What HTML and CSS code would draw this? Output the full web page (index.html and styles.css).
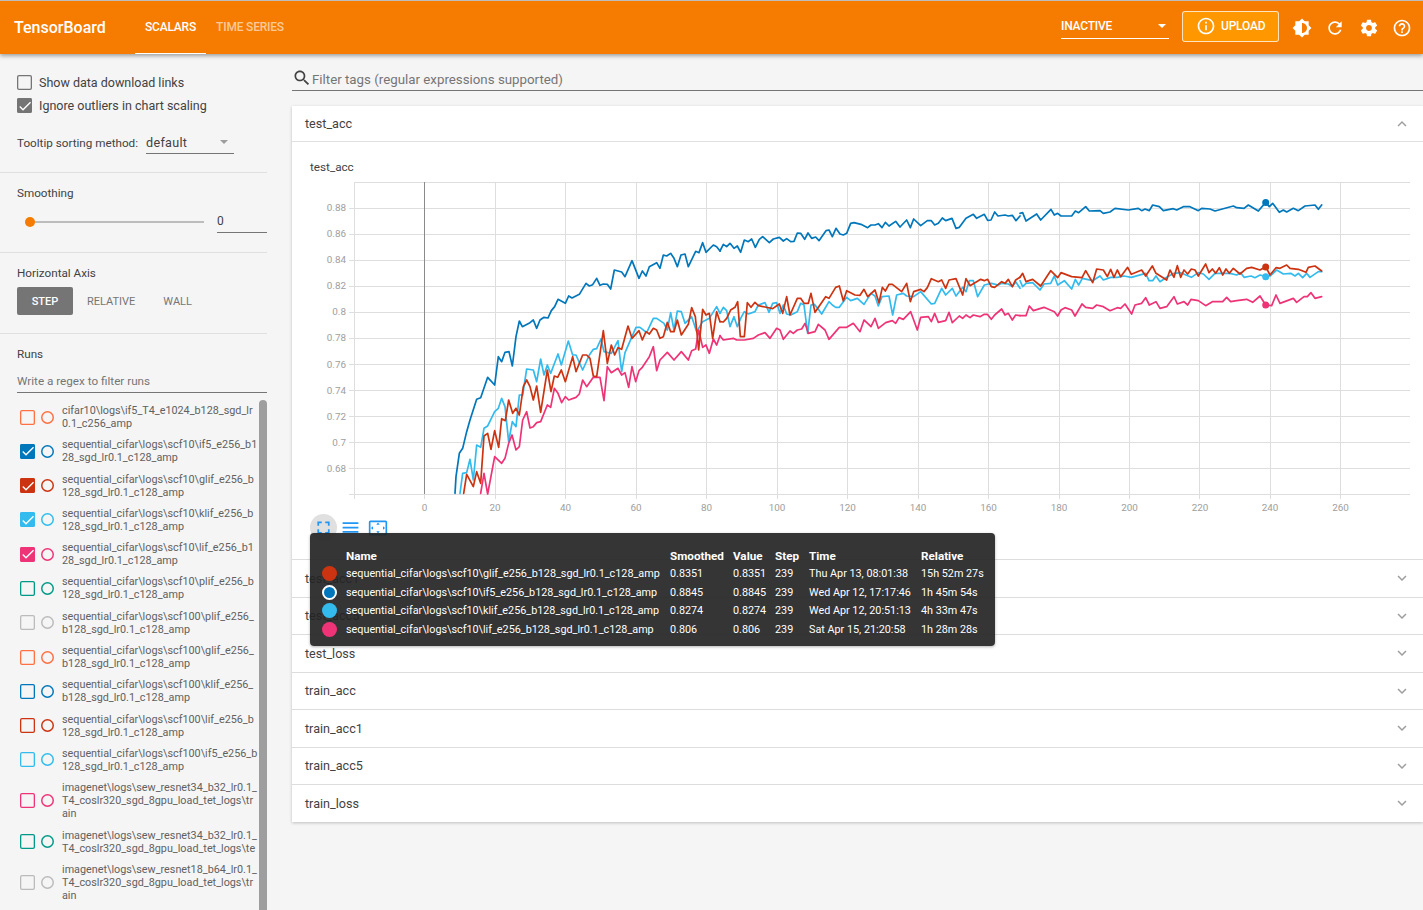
FILE: index.html
```html
<!DOCTYPE html>
<html lang="en">
<head>
<meta charset="utf-8">
<title>TensorBoard</title>
<link rel="stylesheet" href="styles.css">
</head>
<body>
<header class="topbar">
  <div class="logo">TensorBoard</div>
  <nav class="tabs">
    <div class="tab active">SCALARS</div>
    <div class="tab">TIME SERIES</div>
  </nav>
  <div class="spacer"></div>
  <div class="inactive"><span>INACTIVE</span><i class="caret white"></i></div>
  <div class="upload">
    <svg class="ic-upload" viewBox="0 0 24 24"><path d="M11 17h2v-6h-2v6zm1-15C6.48 2 2 6.48 2 12s4.48 10 10 10 10-4.48 10-10S17.52 2 12 2zm0 18c-4.41 0-8-3.59-8-8s3.59-8 8-8 8 3.59 8 8-3.59 8-8 8zM11 9h2V7h-2v2z"/></svg>
    <span>UPLOAD</span>
  </div>
  <div class="top-icons">
    <svg viewBox="0 0 24 24"><path fill-rule="evenodd" d="M20 15.31L23.31 12 20 8.69V4h-4.69L12 .69 8.69 4H4v4.69L.69 12 4 15.31V20h4.69L12 23.31 15.31 20H20v-4.69zM12 18V6c3.31 0 6 2.69 6 6s-2.69 6-6 6z"/></svg>
    <svg viewBox="0 0 24 24"><path d="M17.65 6.35C16.2 4.9 14.21 4 12 4c-4.42 0-7.99 3.58-7.99 8s3.57 8 7.99 8c3.73 0 6.84-2.55 7.73-6h-2.08c-.82 2.33-3.04 4-5.65 4-3.31 0-6-2.69-6-6s2.69-6 6-6c1.66 0 3.14.69 4.22 1.78L13 11h7V4l-2.35 2.35z"/></svg>
    <svg viewBox="0 0 24 24"><path d="M19.43 12.98c.04-.32.07-.64.07-.98s-.03-.66-.07-.98l2.11-1.65c.19-.15.24-.42.12-.64l-2-3.46c-.12-.22-.39-.3-.61-.22l-2.49 1c-.52-.4-1.08-.73-1.69-.98l-.38-2.65C14.46 2.18 14.25 2 14 2h-4c-.25 0-.46.18-.49.42l-.38 2.65c-.61.25-1.17.59-1.69.98l-2.49-1c-.23-.09-.49 0-.61.22l-2 3.46c-.13.22-.07.49.12.64l2.11 1.65c-.04.32-.07.65-.07.98s.03.66.07.98l-2.11 1.65c-.19.15-.24.42-.12.64l2 3.46c.12.22.39.3.61.22l2.49-1c.52.4 1.08.73 1.69.98l.38 2.65c.03.24.24.42.49.42h4c.25 0 .46-.18.49-.42l.38-2.65c.61-.25 1.17-.59 1.69-.98l2.49 1c.23.09.49 0 .61-.22l2-3.46c.12-.22.07-.49-.12-.64l-2.11-1.65zM12 15.5c-1.93 0-3.5-1.57-3.5-3.5s1.57-3.5 3.5-3.5 3.5 1.57 3.5 3.5-1.57 3.5-3.5 3.5z"/></svg>
    <svg viewBox="0 0 24 24"><path d="M11 18h2v-2h-2v2zm1-16C6.48 2 2 6.48 2 12s4.48 10 10 10 10-4.48 10-10S17.52 2 12 2zm0 18c-4.41 0-8-3.59-8-8s3.59-8 8-8 8 3.59 8 8-3.59 8-8 8zm0-14c-2.21 0-4 1.79-4 4h2c0-1.1.9-2 2-2s2 .9 2 2c0 2-3 1.75-3 5h2c0-2.25 3-2.5 3-5 0-2.21-1.79-4-4-4z"/></svg>
  </div>
</header>

<div class="layout">
  <aside class="sidebar">
    <section class="sec sec-options">
      <label class="opt"><span class="cb"></span>Show data download links</label>
      <label class="opt"><span class="cb on grey"><svg viewBox="0 0 24 24"><path d="M9 16.17L4.83 12l-1.41 1.41L9 19 21 7l-1.41-1.41z"/></svg></span>Ignore outliers in chart scaling</label>
      <div class="sort-row">
        <span class="sort-label">Tooltip sorting method:</span>
        <span class="sort-select">default<i class="caret"></i></span>
      </div>
    </section>
    <section class="sec sec-smooth">
      <div class="sec-title">Smoothing</div>
      <div class="slider-row">
        <div class="slider"><span class="knob"></span></div>
        <div class="slider-val">0</div>
      </div>
    </section>
    <section class="sec sec-axis">
      <div class="sec-title">Horizontal Axis</div>
      <div class="axis-btns">
        <span class="axis-btn sel">STEP</span>
        <span class="axis-btn rel">RELATIVE</span>
        <span class="axis-btn">WALL</span>
      </div>
    </section>
    <section class="sec-runs">
      <div class="sec-title">Runs</div>
      <div class="regex">Write a regex to filter runs</div>
      <div class="run-wrap">
        <div class="run c-orange"><span class="cb"></span><span class="dot"></span><span class="run-name">cifar10\logs\if5_T4_e1024_b128_sgd_lr0.1_c256_amp</span></div>
        <div class="run c-blue"><span class="cb on"><svg viewBox="0 0 24 24"><path d="M9 16.17L4.83 12l-1.41 1.41L9 19 21 7l-1.41-1.41z"/></svg></span><span class="dot"></span><span class="run-name">sequential_cifar\logs\scf10\if5_e256_b128_sgd_lr0.1_c128_amp</span></div>
        <div class="run c-red"><span class="cb on"><svg viewBox="0 0 24 24"><path d="M9 16.17L4.83 12l-1.41 1.41L9 19 21 7l-1.41-1.41z"/></svg></span><span class="dot"></span><span class="run-name">sequential_cifar\logs\scf10\glif_e256_b128_sgd_lr0.1_c128_amp</span></div>
        <div class="run c-cyan"><span class="cb on"><svg viewBox="0 0 24 24"><path d="M9 16.17L4.83 12l-1.41 1.41L9 19 21 7l-1.41-1.41z"/></svg></span><span class="dot"></span><span class="run-name">sequential_cifar\logs\scf10\klif_e256_b128_sgd_lr0.1_c128_amp</span></div>
        <div class="run c-pink"><span class="cb on"><svg viewBox="0 0 24 24"><path d="M9 16.17L4.83 12l-1.41 1.41L9 19 21 7l-1.41-1.41z"/></svg></span><span class="dot"></span><span class="run-name">sequential_cifar\logs\scf10\lif_e256_b128_sgd_lr0.1_c128_amp</span></div>
        <div class="run c-teal"><span class="cb"></span><span class="dot"></span><span class="run-name">sequential_cifar\logs\scf10\plif_e256_b128_sgd_lr0.1_c128_amp</span></div>
        <div class="run c-grey"><span class="cb"></span><span class="dot"></span><span class="run-name">sequential_cifar\logs\scf100\plif_e256_b128_sgd_lr0.1_c128_amp</span></div>
        <div class="run c-orange"><span class="cb"></span><span class="dot"></span><span class="run-name">sequential_cifar\logs\scf100\glif_e256_b128_sgd_lr0.1_c128_amp</span></div>
        <div class="run c-blue"><span class="cb"></span><span class="dot"></span><span class="run-name">sequential_cifar\logs\scf100\klif_e256_b128_sgd_lr0.1_c128_amp</span></div>
        <div class="run c-red"><span class="cb"></span><span class="dot"></span><span class="run-name">sequential_cifar\logs\scf100\lif_e256_b128_sgd_lr0.1_c128_amp</span></div>
        <div class="run c-cyan"><span class="cb"></span><span class="dot"></span><span class="run-name">sequential_cifar\logs\scf100\if5_e256_b128_sgd_lr0.1_c128_amp</span></div>
        <div class="run c-pink"><span class="cb"></span><span class="dot"></span><span class="run-name">imagenet\logs\sew_resnet34_b32_lr0.1_T4_coslr320_sgd_8gpu_load_tet_logs\train</span></div>
        <div class="run c-teal"><span class="cb"></span><span class="dot"></span><span class="run-name">imagenet\logs\sew_resnet34_b32_lr0.1_T4_coslr320_sgd_8gpu_load_tet_logs\te</span></div>
        <div class="run c-grey"><span class="cb"></span><span class="dot"></span><span class="run-name">imagenet\logs\sew_resnet18_b64_lr0.1_T4_coslr320_sgd_8gpu_load_tet_logs\train</span></div>
        <div class="scrollbar"></div>
      </div>
    </section>
  </aside>

  <main class="main">
    <div class="filter">
      <svg viewBox="0 0 24 24"><path d="M15.5 14h-.79l-.28-.27C15.41 12.59 16 11.11 16 9.5 16 5.91 13.09 3 9.5 3S3 5.91 3 9.5 5.91 16 9.5 16c1.61 0 3.09-.59 4.23-1.57l.27.28v.79l5 4.99L20.49 19l-4.99-5zm-6 0C7.01 14 5 11.99 5 9.5S7.01 5 9.5 5 14 7.01 14 9.5 11.99 14 9.5 14z"/></svg>
      <span>Filter tags (regular expressions supported)</span>
    </div>

    <div class="panels">
      <div class="panel open">
        <div class="panel-head"><span>test_acc</span><svg viewBox="0 0 24 24"><path d="M12 8l-6 6 1.41 1.41L12 10.83l4.59 4.58L18 14z"/></svg></div>
        <div class="panel-body">
          <div class="chart-title">test_acc</div>
          <svg class="chart" viewBox="292 175 1131 340">
            <g class="grid">
              <path d="M354 182.500H1410M354 208.500H1410M354 234.500H1410M354 260.500H1410M354 286.500H1410M354 312.500H1410M354 338.500H1410M354 364.500H1410M354 390.500H1410M354 416.500H1410M354 442.500H1410M354 468.500H1410M349 494.500H1410"/>
              <path d="M354.500 182V499M495.500 182V499M565.500 182V499M636.500 182V499M706.500 182V499M777.500 182V499M847.500 182V499M918.500 182V499M988.500 182V499M1059.500 182V499M1129.500 182V499M1199.500 182V499M1270.500 182V499M1340.500 182V499M424.500 494V499"/>
              <path d="M349 208.500H354M349 234.500H354M349 260.500H354M349 286.500H354M349 312.500H354M349 338.500H354M349 364.500H354M349 390.500H354M349 416.500H354M349 442.500H354M349 468.500H354"/>
            </g>
            <path class="zero" d="M424.500 182V494"/>
            <g class="ylab">
              <text x="346" y="211">0.88</text><text x="346" y="237">0.86</text><text x="346" y="263">0.84</text><text x="346" y="289">0.82</text><text x="346" y="315">0.8</text><text x="346" y="341">0.78</text><text x="346" y="368">0.76</text><text x="346" y="394">0.74</text><text x="346" y="420">0.72</text><text x="346" y="446">0.7</text><text x="346" y="472">0.68</text>
            </g>
            <g class="xlab">
              <text x="424.500" y="511">0</text><text x="495" y="511">20</text><text x="565.500" y="511">40</text><text x="636" y="511">60</text><text x="706.500" y="511">80</text><text x="777" y="511">100</text><text x="847.500" y="511">120</text><text x="918" y="511">140</text><text x="988.500" y="511">160</text><text x="1059" y="511">180</text><text x="1129.500" y="511">200</text><text x="1200" y="511">220</text><text x="1270" y="511">240</text><text x="1340.500" y="511">260</text>
            </g>
            <g transform="translate(420 190) scale(.33333)">
              <polyline class="ln blue" points="105,910 108,860 118,790 128,775 140,725 150,690 170,628 182,623 203,562 224,585 235,500 245,515 255,487 267,485 277,528 288,440 298,393 307,410 330,398 340,390 350,415 360,390 372,382 384,384 394,362 404,350 414,328 436,340 446,318 456,324 478,313 498,280 508,288 518,284 530,265 540,286 550,282 562,283 572,297 583,240 605,246 615,260 636,212 657,265 667,243 678,258 688,230 710,218 720,235 730,195 740,198 752,190 762,205 772,230 783,195 795,192 805,230 827,184 837,188 848,158 858,187 880,165 890,170 900,183"/>
              <polyline class="ln cyan" points="120,910 128,850 140,848 150,808 160,870 170,765 182,772 192,715 203,708 224,665 235,655 245,625 255,650 266,755 277,695 288,710 298,615 308,615 320,537 340,540 350,575 362,507 372,555 382,525 392,550 414,492 424,525 445,453 458,495 468,495 488,540 508,495 520,478 530,476 543,447 552,485 574,490 594,452 605,545 615,488 648,412 660,412 680,428 700,385 710,385 732,400 742,420 752,368 762,420 772,363 784,365 795,400 815,380 830,425 848,395 868,385 890,350 900,370"/>
              <polyline class="ln pink" points="182,910 192,850 203,912 224,800 245,820 255,805 266,760 276,735 288,780 298,770 308,690 320,665 330,714 340,710 350,698 362,695 382,645 392,652 403,595 414,610 425,638 436,620 446,630 468,622 478,612 488,570 500,590 520,562 540,562 552,632 562,530 574,548 594,535 605,555 615,548 626,592 636,530 647,575 657,542 667,532 688,500 700,470 710,542 720,510 742,487 762,510 784,485 805,510 815,482 827,477 836,420 848,472 858,465 868,490 880,447 890,465 900,437"/>
              <polyline class="ln red" points="131,910 140,853 160,890 170,845 182,880 192,738 203,730 213,778 224,722 236,772 245,686 256,692 266,630 278,670 288,655 298,675 310,590 320,570 330,590 340,630 350,588 362,667 382,540 393,605 403,558 413,562 424,540 436,575 458,500 468,545 488,495 500,495 510,505 520,558 530,560 550,422 562,520 574,465 584,495 594,473 605,478 624,408 636,445 657,422 667,450 678,425 688,432 700,415 710,420 720,445 730,440 742,397 752,425 762,425 772,390 784,435 805,403 815,353 826,380 836,480 848,358 858,375 868,370 878,445 890,365 900,395"/>
            </g>
            <g transform="translate(700 190) scale(.33333)">
              <polyline class="ln blue" points="60,183 70,163 80,170 90,160 102,175 112,168 122,187 133,150 145,155 155,147 166,172 178,148 188,140 208,158 220,147 238,142 250,153 260,146 272,155 282,154 292,129 302,130 314,148 324,129 335,145 347,141 357,152 378,122 387,120 397,140 408,115 420,132 430,135 440,130 452,100 462,98 483,103 503,113 513,105 525,105 535,101 546,113 556,97 567,108 587,94 600,111 620,90 631,113 641,87 662,107 682,92 694,92 704,105 715,100 727,84 737,92 756,85 768,115 778,112 798,85 820,73 830,85 853,73 863,91 873,90 884,66 894,78 915,75 925,78 937,76 948,92 960,78"/>
              <polyline class="ln cyan" points="60,370 70,352 80,362 90,410 102,380 112,410 122,385 133,365 145,372 165,365 175,345 195,338 207,367 218,340 230,338 240,370 250,345 260,372 272,375 292,365 302,340 312,345 323,430 333,345 343,343 353,355 365,372 387,335 397,345 407,352 418,352 440,322 452,332 472,325 492,343 513,310 525,318 535,348 546,320 567,318 578,375 590,315 610,310 620,318 641,320 662,305 694,342 704,340 725,295 737,315 757,295 768,318 788,292 798,305 808,272 820,272 833,320 853,285 874,280 895,285 905,280 925,282 937,290 947,275 960,295"/>
            </g>
            <g transform="translate(700 280) scale(.33333)">
              <polyline class="ln pink" points="60,167 70,180 100,175 110,180 122,180 133,180 160,175 175,165 195,158 210,175 230,145 240,150 250,178 270,153 280,160 292,150 305,147 315,130 325,160 345,155 355,133 375,150 387,178 418,142 440,142 460,130 480,155 492,120 503,130 513,140 525,115 535,145 557,128 577,122 587,130 597,113 610,118 632,95 652,150 662,112 685,110 694,125 704,100 715,127 737,122 747,97 757,128 778,108 788,115 798,105 810,113 820,105 840,110 853,103 862,103 874,118 884,105 905,87 915,105 925,100 937,120 947,105 960,107"/>
            </g>
            <g transform="translate(700 190) scale(.33333)">
              <polyline class="ln red" points="60,395 70,396 80,385 92,360 105,352 113,335 121,440 133,440 142,338 153,352 165,337 175,347 195,351 218,356 238,342 248,370 260,320 270,375 292,325 302,325 312,340 325,340 333,310 345,367 377,320 387,325 407,292 418,288 430,333 440,302 465,315 480,316 492,298 503,320 525,300 537,338 547,292 556,303 567,283 577,283 605,305 620,280 631,335 641,305 662,298 672,305 682,293 694,266 715,275 725,270 737,295 747,270 768,266 788,315 798,266 810,287 830,275 842,268 853,272 863,268 874,290 884,292 905,275 915,280 925,268 937,290 947,270 960,262"/>
            </g>
            <g transform="translate(1020 190) scale(.33333)">
              <polyline class="ln blue" points="0,70 8,68 18,93 50,72 62,90 93,58 103,75 113,70 123,78 155,78 166,63 176,68 197,50 208,63 240,62 250,70 270,66 285,55 325,60 355,55 365,62 375,57 388,62 398,45 418,50 430,62 460,56 470,60 490,50 510,50 535,62 545,55 570,57 585,63 640,48 650,53 672,55 685,45 715,63 737,37 748,50 758,40 778,67 790,60 800,66 820,55 835,62 855,48 885,45 895,58 905,45"/>
              <polyline class="ln cyan" points="0,272 8,290 18,280 38,278 60,300 72,282 92,280 103,258 113,285 133,272 155,297 166,268 176,285 187,265 218,272 240,258 250,270 272,262 292,262 312,258 334,262 377,250 387,272 398,272 408,258 420,275 440,262 462,250 482,248 514,262 535,248 550,252 567,268 585,250 630,250 650,255 662,248 672,262 693,258 705,263 720,255 737,260 750,258 770,240 790,252 812,250 825,258 835,250 848,263 860,250 870,262 895,245 905,245"/>
              <polyline class="ln pink" points="0,377 18,377 28,348 40,362 72,352 103,365 113,378 123,360 135,353 155,360 165,378 186,342 197,352 218,355 230,345 250,350 270,362 292,353 302,355 315,342 335,372 345,345 365,340 377,323 388,345 408,335 420,355 440,350 462,320 472,342 492,335 503,345 513,328 535,332 557,347 577,335 608,335 620,322 632,335 650,332 680,328 698,337 720,318 737,345 755,347 768,315 780,340 820,325 830,337 852,320 862,320 873,308 885,325 905,320"/>
              <polyline class="ln red" points="0,262 8,250 18,275 38,268 62,288 92,242 113,263 123,248 155,260 186,263 197,242 218,278 230,237 250,240 262,260 272,238 282,262 292,240 302,260 323,232 334,253 365,240 377,258 397,228 408,250 440,270 450,240 462,262 472,227 482,262 492,240 503,252 514,237 525,240 535,258 557,222 567,248 577,237 587,250 598,233 608,255 618,237 628,250 640,235 660,252 680,235 695,232 720,240 737,230 750,255 768,233 780,235 800,225 810,235 835,238 858,247 865,232 885,228 905,243"/>
            </g>
            <circle class="pt-blue" cx="1265.700" cy="202.500" r="3.500"/>
            <circle class="pt-red" cx="1265.700" cy="267" r="3.500"/>
            <circle class="pt-cyan" cx="1265.700" cy="276.700" r="3.500"/>
            <circle class="pt-pink" cx="1265.700" cy="305" r="3.500"/>
          </svg>
          <div class="chart-tools">
            <span class="tool hover"><svg viewBox="0 0 24 24"><path d="M7 14H5v5h5v-2H7v-3zm-2-4h2V7h3V5H5v5zm12 7h-3v2h5v-5h-2v3zM14 5v2h3v3h2V5h-5z"/></svg></span>
            <span class="tool"><svg viewBox="0 0 24 24"><path d="M3 18h18v-2H3v2zm0-5h18v-2H3v2zm0-7v2h18V6H3z"/></svg></span>
            <span class="tool"><svg viewBox="0 0 24 24"><path d="M12.010 5.500L10 8h4l-1.990-2.500zM18 10v4l2.500-1.990L18 10zM6 10l-2.500 2.010L6 14v-4zm8 6h-4l2.010 2.500L14 16zm7-13H3c-1.100 0-2 .9-2 2v14c0 1.100.9 2 2 2h18c1.100 0 2-.9 2-2V5c0-1.100-.9-2-2-2zm0 16.010H3V4.990h18v14.020z"/></svg></span>
          </div>
        </div>
      </div>
      <div class="panel"><div class="panel-head"><span>test_acc1</span><svg viewBox="0 0 24 24"><path d="M16.590 8.590L12 13.170 7.410 8.590 6 10l6 6 6-6z"/></svg></div></div>
      <div class="panel"><div class="panel-head"><span>test_acc5</span><svg viewBox="0 0 24 24"><path d="M16.590 8.590L12 13.170 7.410 8.590 6 10l6 6 6-6z"/></svg></div></div>
      <div class="panel"><div class="panel-head"><span>test_loss</span><svg viewBox="0 0 24 24"><path d="M16.590 8.590L12 13.170 7.410 8.590 6 10l6 6 6-6z"/></svg></div></div>
      <div class="panel"><div class="panel-head"><span>train_acc</span><svg viewBox="0 0 24 24"><path d="M16.590 8.590L12 13.170 7.410 8.590 6 10l6 6 6-6z"/></svg></div></div>
      <div class="panel"><div class="panel-head"><span>train_acc1</span><svg viewBox="0 0 24 24"><path d="M16.590 8.590L12 13.170 7.410 8.590 6 10l6 6 6-6z"/></svg></div></div>
      <div class="panel"><div class="panel-head"><span>train_acc5</span><svg viewBox="0 0 24 24"><path d="M16.590 8.590L12 13.170 7.410 8.590 6 10l6 6 6-6z"/></svg></div></div>
      <div class="panel"><div class="panel-head"><span>train_loss</span><svg viewBox="0 0 24 24"><path d="M16.590 8.590L12 13.170 7.410 8.590 6 10l6 6 6-6z"/></svg></div></div>
    </div>
  </main>
</div>

<div class="tooltip">
  <table>
    <thead>
      <tr><th class="t-sw"></th><th class="t-name">Name</th><th class="t-smooth">Smoothed</th><th class="t-val">Value</th><th class="t-step">Step</th><th class="t-time">Time</th><th>Relative</th></tr>
    </thead>
    <tbody>
      <tr><td><span class="sw s-red"></span></td><td>sequential_cifar\logs\scf10\glif_e256_b128_sgd_lr0.1_c128_amp</td><td>0.8351</td><td>0.8351</td><td>239</td><td>Thu Apr 13, 08:01:38</td><td>15h 52m 27s</td></tr>
      <tr><td><span class="sw s-blue"></span></td><td>sequential_cifar\logs\scf10\if5_e256_b128_sgd_lr0.1_c128_amp</td><td>0.8845</td><td>0.8845</td><td>239</td><td>Wed Apr 12, 17:17:46</td><td>1h 45m 54s</td></tr>
      <tr><td><span class="sw s-cyan"></span></td><td>sequential_cifar\logs\scf10\klif_e256_b128_sgd_lr0.1_c128_amp</td><td>0.8274</td><td>0.8274</td><td>239</td><td>Wed Apr 12, 20:51:13</td><td>4h 33m 47s</td></tr>
      <tr><td><span class="sw s-pink"></span></td><td>sequential_cifar\logs\scf10\lif_e256_b128_sgd_lr0.1_c128_amp</td><td>0.806</td><td>0.806</td><td>239</td><td>Sat Apr 15, 21:20:58</td><td>1h 28m 28s</td></tr>
    </tbody>
  </table>
</div>
</body>
</html>
```

FILE: styles.css
```css
* { box-sizing: border-box; }
html, body { margin: 0; height: 910px; overflow: hidden; }
body { background: #f5f5f5; font-family: Roboto, "Liberation Sans", sans-serif; color: #424242; position: relative; }

.topbar { height: 54px; border-top: 1px solid #bdbdbd; background: #f57c00; color: #fff; display: flex; align-items: center; padding-left: 14px; box-shadow: 0 2px 4px rgba(0,0,0,.35); position: relative; z-index: 2; }
.logo { font-size: 16px; font-weight: 500; width: 121px; }
.tabs { display: flex; align-self: stretch; }
.tab { width: 71px; display: flex; align-items: center; justify-content: center; font-size: 12px; font-weight: 500; letter-spacing: -.2px; color: rgba(255,255,255,.6); padding-bottom: 1px; }
.tab + .tab { width: 88px; }
.tab.active { color: #fff; border-bottom: 1px solid #fff; padding-bottom: 0; }
.spacer { flex: 1; }
.caret { display: inline-block; width: 0; height: 0; border-left: 4px solid transparent; border-right: 4px solid transparent; border-top: 4px solid #9e9e9e; }
.caret.white { border-top-color: #fff; }
.inactive { width: 108px; height: 26px; margin-top: -3px; padding: 1px 3px 0 0; border-bottom: 1px solid #fff; display: flex; align-items: center; justify-content: space-between; font-size: 12px; font-weight: 500; letter-spacing: -.2px; }
.upload { width: 97px; height: 31px; margin: -2px 0 0 13px; background: #ff9800; border: 1px solid rgba(255,255,255,.75); border-radius: 3px; display: flex; align-items: center; padding: 0 0 1px 13px; gap: 5px; font-size: 12px; font-weight: 500; letter-spacing: -.2px; }
.ic-upload { width: 20px; height: 20px; fill: #fff; }
.top-icons { display: flex; gap: 13.500px; margin-left: 12.500px; margin-right: 11px; }
.top-icons svg { width: 20px; height: 20px; fill: #fff; }

.layout { display: flex; height: 856px; }
.sidebar { width: 267px; flex: none; overflow: hidden; display: flex; flex-direction: column; }
.sec { border-bottom: 1px solid #e0e0e0; padding-left: 17px; flex: none; }
.sec-options { height: 119px; padding-top: 17px; }
.opt { display: flex; align-items: center; gap: 7px; height: 23px; font-size: 12.500px; color: #424242; }
.cb { width: 15px; height: 15px; box-shadow: inset 0 0 0 1.300px currentColor; border-radius: 2px; flex: none; display: flex; align-items: center; justify-content: center; color: #757575; }
.cb svg { width: 16px; height: 16px; flex: none; fill: #fff; }
.cb.on { background: currentColor; }
.sort-row { display: flex; align-items: flex-start; margin-top: 16px; font-size: 11.700px; }
.sort-label { padding-top: 3px; width: 129px; }
.sort-select { width: 88px; height: 21px; border-bottom: 1px solid #757575; font-size: 12.600px; display: flex; align-items: center; justify-content: space-between; padding: 0 6px 2px 0; letter-spacing: .3px; }
.sec-title { font-size: 11.700px; color: #424242; }
.sec-smooth { height: 80px; padding-top: 13px; }
.slider-row { display: flex; align-items: flex-start; margin-top: 13px; }
.slider { width: 174px; height: 2px; background: #bdbdbd; margin: 8px 0 0 13px; position: relative; }
.knob { position: absolute; left: -5px; top: -4px; width: 10px; height: 10px; border-radius: 50%; background: #f57c00; }
.slider-val { width: 50px; height: 20px; margin-left: 13px; border-bottom: 1px solid #757575; font-size: 12px; padding-top: 1px; }
.sec-axis { height: 81px; padding-top: 13px; }
.axis-btns { display: flex; margin-top: 7px; align-items: center; font-size: 11px; color: #757575; }
.axis-btn { height: 28px; display: flex; align-items: center; margin-right: 28px; }
.axis-btn.sel { width: 56px; justify-content: center; background: #757575; color: #fff; border-radius: 2px; margin-right: 14px; font-weight: 500; }
.sec-runs { padding-left: 17px; padding-top: 13px; flex: 1; min-height: 0; display: flex; flex-direction: column; }
.regex { margin-top: 13px; height: 19px; font-size: 11.700px; color: #757575; border-bottom: 1px solid #757575; flex: none; }
.run-wrap { position: relative; flex: 1; min-height: 0; margin-left: -17px; padding: 11px 0 0 20px; }
.run { display: flex; align-items: center; margin-bottom: 8.300px; }
.dot { width: 13px; height: 13px; border-radius: 50%; box-shadow: inset 0 0 0 1.500px currentColor; margin: 0 8px 0 6px; flex: none; }
.run-name { width: 196px; font-size: 10.800px; line-height: 13px; word-break: break-all; color: #616161; }
.scrollbar { position: absolute; right: 0; top: 7px; bottom: 0; width: 8px; background: #9e9e9e; border-radius: 4px 4px 0 0; }
.c-orange { color: #ff7043; }
.c-blue { color: #0077bb; }
.c-red { color: #cc3311; }
.c-cyan { color: #33bbee; }
.c-pink { color: #ee3377; }
.c-teal { color: #009988; }
.c-grey { color: #bbbbbb; }
.run .cb { color: inherit; }

.main { flex: 1; min-width: 0; padding-left: 25px; }
.filter { height: 37px; display: flex; align-items: flex-end; padding-bottom: 2px; border-bottom: 1px solid #757575; font-size: 13.300px; color: #757575; }
.filter svg { width: 20px; height: 20px; fill: #424242; }
.filter span { line-height: 18px; margin-bottom: -1px; }
.panels { margin-top: 15px; box-shadow: 0 1px 3px rgba(0,0,0,.22); background: #fff; }
.panel { background: #fff; border-bottom: 1px solid #ddd; }
.panel:last-child { border-bottom: 0; }
.panel-head { height: 36.500px; display: flex; align-items: center; justify-content: space-between; padding: 0 12px 0 13px; font-size: 12.600px; color: #424242; }
.panel-head svg { width: 18px; height: 18px; fill: #9e9e9e; }
.panel.open .panel-head { height: 36px; border-bottom: 1px solid #e0e0e0; }
.panel-body { height: 417px; padding-top: 18px; position: relative; }
.chart-title { font-size: 11.700px; padding-left: 18px; line-height: 14px; }
.chart { display: block; width: 1131px; height: 340px; margin-top: 1px; }
.grid path { fill: none; stroke: #dedede; stroke-width: 1; }
.zero { stroke: #8a8a8a; stroke-width: 1; fill: none; }
.ylab text { font-size: 9.900px; fill: #9e9e9e; text-anchor: end; }
.xlab text { font-size: 9.900px; fill: #9e9e9e; text-anchor: middle; }
.ln { fill: none; stroke-width: 1.700px; vector-effect: non-scaling-stroke; stroke-linejoin: round; stroke-linecap: round; }
.blue { stroke: #0077bb; }
.red { stroke: #cc3311; }
.cyan { stroke: #33bbee; }
.pink { stroke: #ee3377; }
.pt-blue { fill: #0077bb; }
.pt-red { fill: #cc3311; }
.pt-cyan { fill: #33bbee; }
.pt-pink { fill: #ee3377; }
.chart-tools { display: flex; align-items: center; margin: -1px 0 0 18px; }
.tool { width: 27px; height: 27px; display: flex; align-items: center; justify-content: center; }
.tool svg { width: 21px; height: 21px; fill: #2196f3; }
.tool:last-child svg { width: 20px; height: 20px; }
.tool.hover { background: #e0e0e0; border-radius: 50%; }

.tooltip { position: absolute; left: 310px; top: 533px; width: 685px; height: 113px; background: rgba(36,36,36,.92); border-radius: 4px; color: #fff; font-size: 10.800px; box-shadow: 0 1px 3px rgba(0,0,0,.3); padding: 14px 0 0 10px; z-index: 3; }
.tooltip table { border-collapse: collapse; table-layout: fixed; width: 670px; }
.tooltip th { text-align: left; font-size: 11.700px; font-weight: 700; padding: 0; height: 17.500px; }
.tooltip td { padding: 0; height: 18.500px; white-space: nowrap; }
.t-sw { width: 26px; }
.t-name { width: 324px; }
.t-smooth { width: 63px; }
.t-val { width: 42px; }
.t-step { width: 34px; }
.t-time { width: 112px; }
.sw { display: block; width: 15px; height: 15px; border-radius: 50%; margin-left: 2px; }
.s-red { background: #cc3311; }
.s-blue { background: #0077bb; border: 2px solid #fff; }
.s-cyan { background: #33bbee; }
.s-pink { background: #ee3377; }
```
